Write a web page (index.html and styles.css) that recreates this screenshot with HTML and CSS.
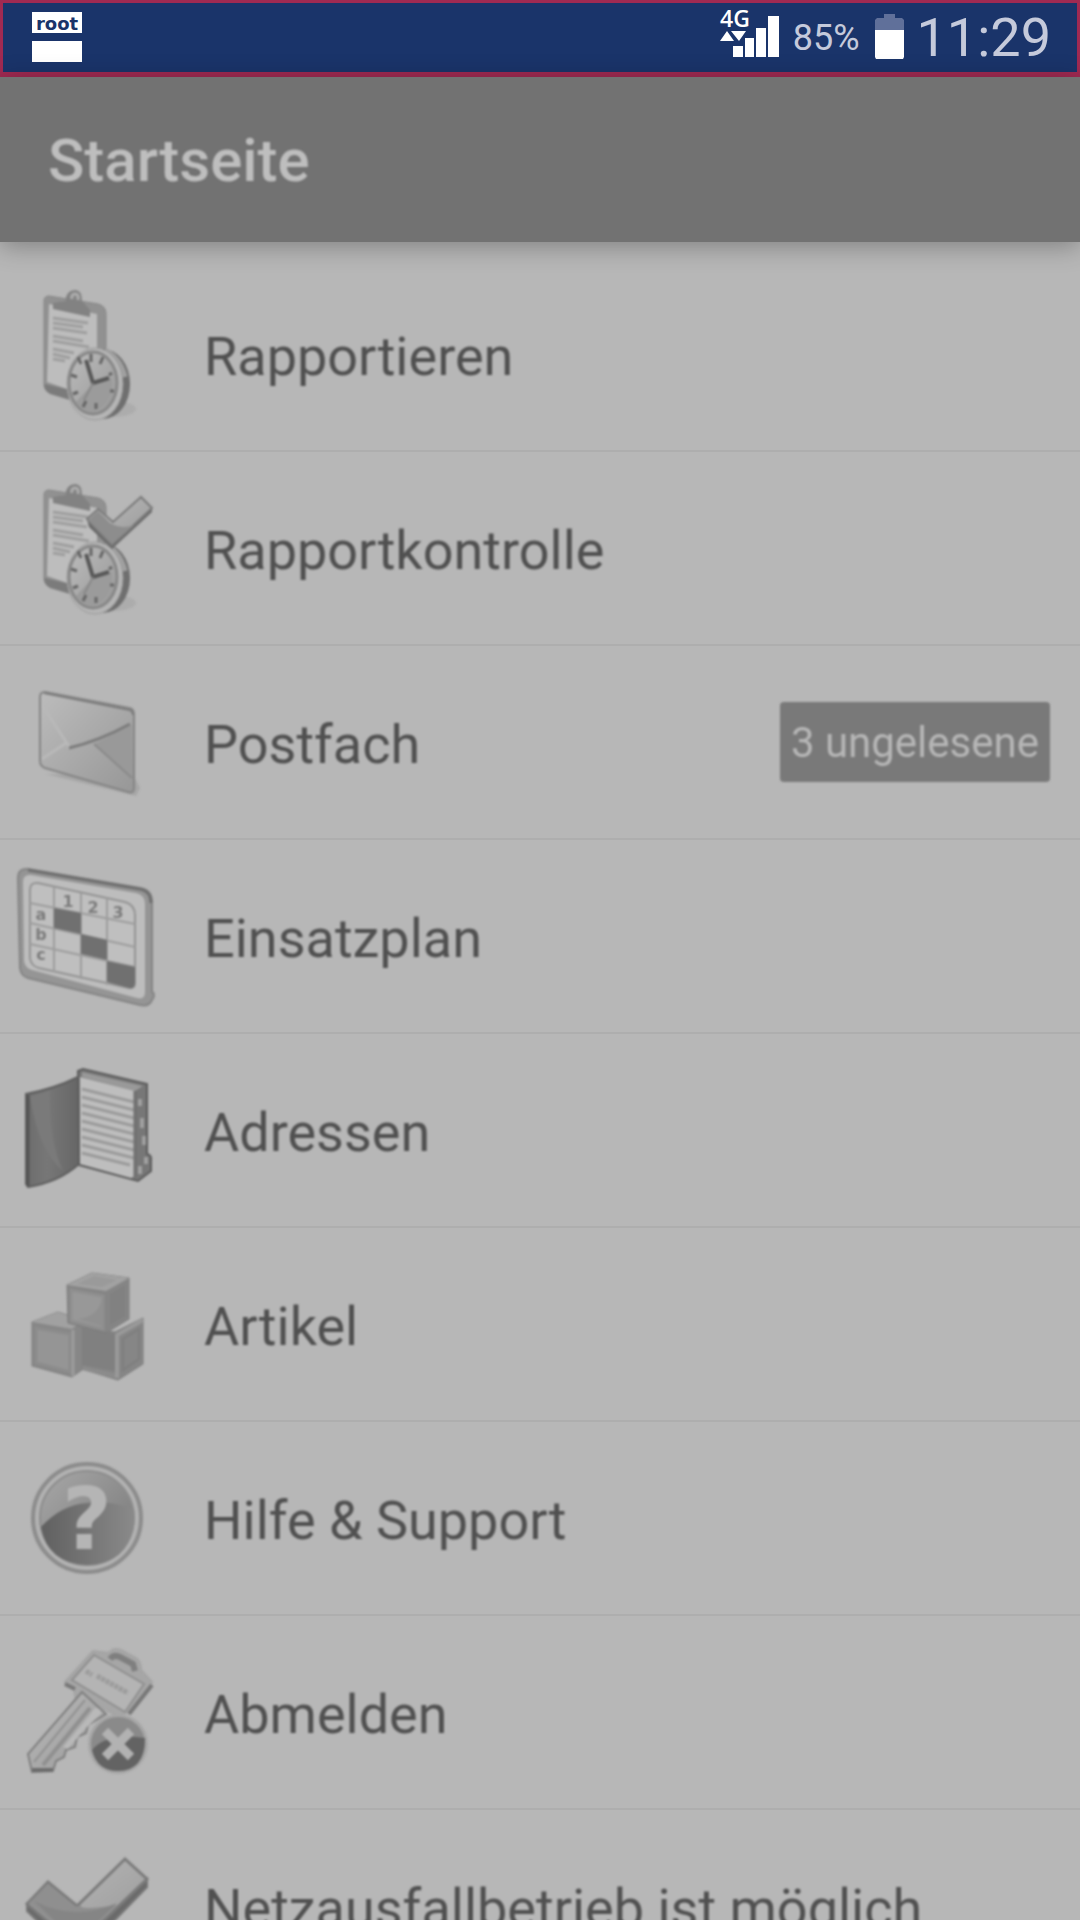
FILE: index.html
```html
<!DOCTYPE html>
<html lang="de">
<head>
    <meta charset="UTF-8">
    <meta name="viewport" content="width=device-width, initial-scale=1.0">
    <title>Startseite</title>
    <link rel="stylesheet" href="styles.css">
</head>
<body>
    <div class="statusbar">
        <div class="root-icon">
            <span>root</span>
            <span></span>
        </div>
        <div class="status-right">
            <svg class="signal" viewBox="0 0 60 50">
                <text x="0" y="18">4G</text>
                <path d="M0 32 7 22l7 10zM11 22h15l-7 10z"/>
                <path d="M13 37h10v11H13zM25 29h9v19h-9zM36 19h10v29H36zM48 7h11v41H48z"/>
            </svg>
            <span class="percent">85%</span>
            <svg class="battery" viewBox="0 0 30 46">
                <path class="battery-empty" d="M9 0h11v4h7l2 2v11H0V6l2-2h7z"/>
                <path d="M0 16h29v27l-1 2H1l-1-2z"/>
            </svg>
            <span class="clock">11:29</span>
        </div>
    </div>

    <header class="header">
        <h1>Startseite</h1>
    </header>

    <!-- shared gradients and shapes for the menu icons -->
    <svg class="defs" width="0" height="0" aria-hidden="true">
        <defs>
            <linearGradient id="light" x1="0" y1="0" x2="1" y2="1">
                <stop offset="0" stop-color="#bcbcbc"/>
                <stop offset="1" stop-color="#979797"/>
            </linearGradient>
            <linearGradient id="metal" x1="0" y1="0" x2="1" y2="1">
                <stop offset="0" stop-color="#a8a8a8"/>
                <stop offset="1" stop-color="#757575"/>
            </linearGradient>
            <linearGradient id="dark" x1="0" y1="0" x2="1" y2="0">
                <stop offset="0" stop-color="#6d6d6d"/>
                <stop offset=".4" stop-color="#777777"/>
                <stop offset="1" stop-color="#666666"/>
            </linearGradient>
            <linearGradient id="gloss" x1="0" y1="0" x2="1" y2="0">
                <stop offset="0" stop-color="#606060"/>
                <stop offset="1" stop-color="#8a8a8a"/>
            </linearGradient>
            <g id="report">
                <ellipse cx="112" cy="151" rx="24" ry="8" fill="#acacac"/>
                <path d="M44 43q0-5 5-5l49 8q8 2 8 10v82l-36 2-19-5q-7-2-7-9z" fill="#919191" stroke="#858585"/>
                <path d="M44 126l26 6v10l-20-6q-6-3-6-10z" fill="#7b7b7b"/>
                <path d="M49 46l48 10v78l-27-2-23-8z" fill="#bdbdbd"/>
                <path d="M53 45l13-2q-1-10 9-11 7 0 7 11l8 9v7l-37-8z" fill="#828282"/>
                <path d="M72 41q-1-5 3-5t3 6" fill="none" stroke="#adadad" stroke-width="3"/>
                <path d="M53 60l35 5M53 65l30 4M53 70l34 5M53 78l30 5M53 83l36 6M53 91l21 4M53 96l17 4M53 101l12 2" stroke="#9f9f9f" stroke-width="3"/>
                <ellipse cx="103" cy="126" rx="27" ry="35" fill="#6f6f6f"/>
                <path d="M105 92q16 9 20 27" fill="none" stroke="#a0a0a0" stroke-width="5"/>
                <ellipse cx="95" cy="126" rx="28" ry="36" fill="#b5b5b5" stroke="#9b9b9b"/>
                <ellipse cx="93" cy="125" rx="24" ry="31" fill="url(#light)" stroke="#888888" stroke-width="3"/>
                <path d="M93 126l19-6q2 25-19 34-12-1-17-10z" fill="#9b9b9b"/>
                <path d="M91 96v8M78 99l3 7M103 99l-3 7M71 117l6 2M73 136l5-2M83 149l3-6M110 133h4M112 115l-3 2M96 145v6" stroke="#666666" stroke-width="3"/>
                <path d="M86 102l7 23 16-5" fill="none" stroke="#585858" stroke-width="4"/>
                <path d="M93 125l-9 17" stroke="#888888" stroke-width="2"/>
            </g>
        </defs>
    </svg>

    <nav class="menu">
        <a class="menu-item" href="#rapportieren">
            <svg class="icon" viewBox="0 0 168 192"><use href="#report"/></svg>
            <span class="label">Rapportieren</span>
        </a>
        <a class="menu-item" href="#rapportkontrolle">
            <svg class="icon" viewBox="0 0 168 192">
                <use href="#report"/>
                <path d="M87 67l2 8 23 22 40-37v-4l-40 37z" fill="#6a6a6a"/>
                <path d="M87 67l11-10 15 13 28-25 11 11-40 37z" fill="url(#light)" stroke="#7b7b7b" stroke-width="2"/>
                <path d="M88 68l10-9 12 12q12 7 24 2l-22 19z" fill="#8d8d8d"/>
            </svg>
            <span class="label">Rapportkontrolle</span>
        </a>
        <a class="menu-item" href="#postfach">
            <svg class="icon" viewBox="0 0 168 192">
                <path d="M46 128l90 22 4-8-6-12z" fill="#a6a6a6"/>
                <path d="M40 51q0-5 5-5l84 16q5 1 5 6v74q0 6-6 4l-83-24q-5-2-5-7z" fill="url(#light)" stroke="#858585" stroke-width="2"/>
                <path d="M94 98l38-19v53z" fill="#999999"/>
                <path d="M42 113l24-16M42 59l28 43" stroke="#b9b9b9" stroke-width="3"/>
                <path d="M94 98l38 34" stroke="#8a8a8a" stroke-width="2"/>
                <path d="M69 102q30-7 61-24" fill="none" stroke="#7c7c7c" stroke-width="3"/>
                <path d="M44 47l86 17q3 1 3 5" fill="none" stroke="#7c7c7c" stroke-width="2"/>
            </svg>
            <span class="label">Postfach</span>
            <span class="badge">3 ungelesene</span>
        </a>
        <a class="menu-item" href="#einsatzplan">
            <svg class="icon" viewBox="0 0 168 192">
                <path d="M18 38q0-10 10-9l112 19q12 2 12 14v90q4 2 0 8-3 7-12 5L28 138q-7-2-8-10z" fill="#959595" stroke="#858585" stroke-width="2"/>
                <path d="M28 30l112 19q11 2 11 14" fill="none" stroke="#6f6f6f" stroke-width="3"/>
                <path d="M23 42q0-8 8-7l105 18q9 2 9 11v88q0 8-8 6L32 130q-7-2-8-9z" fill="#bdbdbd"/>
                <path d="M30 50q0-8 8-7l87 19q10 3 10 13v68q0 6-6 5L39 128q-8-2-9-10z" fill="#bfbfbf" stroke="#949494" stroke-width="2"/>
                <path d="M54 47v85M81 53v86M107 58v87M30 63l105 21M30 83l105 24M30 104l105 23" stroke="#9d9d9d" stroke-width="2"/>
                <path d="M54 68l27 5v21l-27-6zM81 94l26 6v20l-26-6zM107 121l28 6v16q0 6-6 5l-22-6z" fill="#707070"/>
                <g class="grid-text">
                    <text x="68" y="67">1</text>
                    <text x="93" y="73">2</text>
                    <text x="118" y="78">3</text>
                    <text x="41" y="80">a</text>
                    <text x="41" y="100">b</text>
                    <text x="41" y="120">c</text>
                </g>
            </svg>
            <span class="label">Einsatzplan</span>
        </a>
        <a class="menu-item" href="#adressen">
            <svg class="icon" viewBox="0 0 168 192">
                <path d="M78 37l5-2 64 15v70q5 1 4 7v10l-13 10-59-16z" fill="#777777" stroke="#5c5c5c" stroke-width="2"/>
                <path d="M82 38l61 14-8 5-53-14z" fill="#999999"/>
                <path d="M80 43l55 14v85l-4 2-51-14z" fill="#bebebe"/>
                <path d="M82 55l52 13M82 63l52 13M82 71l52 13M82 79l52 13M82 87l52 13M82 95l52 13M82 103l52 13M82 111l52 13M82 119l48 12" stroke="#9b9b9b" stroke-width="3"/>
                <path d="M135 57v86" stroke="#707070" stroke-width="3"/>
                <path d="M140 65v7M142 84v10M144 102v9M146 123v7M140 132v8" stroke="#a0a0a0" stroke-width="4"/>
                <path d="M26 60q28-5 52-17l1 87q-20 18-51 23l-2-3z" fill="url(#dark)" stroke="#5e5e5e" stroke-width="2"/>
                <path d="M30 62l20-5q-1 50 13 80-25-20-33-75z" fill="#7a7a7a"/>
                <path d="M28 61v91" stroke="#545454" stroke-width="3"/>
            </svg>
            <span class="label">Adressen</span>
        </a>
        <a class="menu-item" href="#artikel">
            <svg class="icon" viewBox="0 0 168 192">
                <path d="M75 100l40 4 28-14v46l-25 16-36-11-7-4z" fill="#868686" stroke="#7c7c7c"/>
                <path d="M82 99l33 7v37l-33-6z" fill="#808080"/>
                <path d="M78 139l38 9" stroke="#8c8c8c" stroke-width="4"/>
                <path d="M117 106v44M117 107l26-15" stroke="#999999" stroke-width="4"/>
                <path d="M123 111l16-10v30l-16 11z" fill="#868686" stroke="#7e7e7e" stroke-width="2"/>
                <path d="M32 94l26-10 24 8v50l-10 7-40-11z" fill="#878787" stroke="#808080"/>
                <path d="M32 94l26-10 24 9-10 8z" fill="#a1a1a1"/>
                <path d="M36 100l34 6v38l-34-9z" fill="#959595" stroke="#8c8c8c" stroke-width="3"/>
                <path d="M73 102v46" stroke="#9c9c9c" stroke-width="3"/>
                <path d="M67 57l25-12 37 5v41l-23 14-38-10z" fill="#858585" stroke="#7c7c7c"/>
                <path d="M67 57l25-12 37 5-23 13z" fill="#a2a2a2"/>
                <path d="M77 56l17-8 23 4-15 7z" fill="#9a9a9a"/>
                <path d="M71 62l32 6v33l-32-8z" fill="#989898" stroke="#8f8f8f" stroke-width="3"/>
                <path d="M110 66l15-9v31l-15 9z" fill="#818181"/>
                <path d="M78 91q20-2 24-20v27z" fill="#909090"/>
            </svg>
            <span class="label">Artikel</span>
        </a>
        <a class="menu-item" href="#hilfe">
            <svg class="icon" viewBox="0 0 168 192">
                <circle cx="87" cy="96" r="54" fill="#b2b2b2" stroke="#8c8c8c" stroke-width="4"/>
                <circle cx="87" cy="96" r="47" fill="url(#metal)" stroke="#8d8d8d" stroke-width="2"/>
                <path d="M41 105q20-22 46-24 22-3 47 6 1 8 0 17-7 38-47 39-40-2-46-38z" fill="url(#gloss)"/>
                <text class="help-mark" x="87" y="127">?</text>
            </svg>
            <span class="label">Hilfe &amp; Support</span>
        </a>
        <a class="menu-item" href="#abmelden">
            <svg class="icon" viewBox="0 0 168 192">
                <path d="M65 66l28-31 16 2q4-6 12-3l15 8q5 3 5 12l11 12-23 30-11 4-35-17-7 3-2-13-8-3z" fill="#a6a6a6" stroke="#a4a4a4" stroke-width="2"/>
                <path d="M110 43q4-5 10-2l13 7 2 7" fill="none" stroke="#7f7f7f" stroke-width="6"/>
                <path d="M65 68l10 5M152 69l-23 29" stroke="#787878" stroke-width="4"/>
                <path d="M82 76L28 138l4 18 21-1 3-10 8-4 2-7 9-3 2-10 9-4 2-8 18-11z" fill="url(#light)" stroke="#808080" stroke-width="2"/>
                <path d="M89 100l5-7q4-3 8 4l-17 16-17 20-5-2z" fill="#b9b9b9"/>
                <path d="M85 84l-51 62" stroke="#929292" stroke-width="2"/>
                <path d="M90 92l-47 57" stroke="#909090" stroke-width="4"/>
                <path d="M32 154h21" stroke="#6c6c6c" stroke-width="4"/>
                <path d="M72 64l22-25 50 29-19 28z" fill="#b4b4b4" stroke="#8f8f8f" stroke-width="2"/>
                <path d="M86 55l6 4M97 60l31 17" stroke="#9c9c9c" stroke-width="5" stroke-dasharray="4 1"/>
                <circle cx="118" cy="128" r="30" fill="#a6a6a6"/>
                <circle cx="118" cy="128" r="27" fill="#8a8a8a"/>
                <path d="M92 134q15-18 53-12 0 33-27 33-21 0-26-21z" fill="#636363"/>
                <path d="M105 115l26 26M131 115l-26 26" stroke="#b2b2b2" stroke-width="9"/>
            </svg>
            <span class="label">Abmelden</span>
        </a>
        <a class="menu-item" href="#netzausfall">
            <svg class="icon" viewBox="0 0 168 192">
                <path d="M27 94v7l50 48 70-72v-8l-70 67z" fill="#6a6a6a" stroke="#777777" stroke-width="2"/>
                <path d="M27 94l21-22 29 24 48-47 22 20-70 67z" fill="url(#light)" stroke="#7b7b7b" stroke-width="3"/>
                <path d="M29 93l19-19 24 20q3 4 9 1-3 6 36 0l-40 39z" fill="#8f8f8f"/>
                <path d="M34 91q40 21 83 2l-40 39z" fill="#858585"/>
            </svg>
            <span class="label">Netzausfallbetrieb ist möglich</span>
        </a>
    </nav>
</body>
</html>
```
FILE: styles.css
```css
* {
    box-sizing: border-box;
}

body {
    margin: 0;
    height: 100vh;
    display: flex;
    flex-direction: column;
    overflow: hidden;
    background-color: #b7b7b7;
    font-family: Roboto, sans-serif;
}

.statusbar {
    flex: none;
    height: 77px;
    display: flex;
    justify-content: space-between;
    align-items: flex-start;
    padding: 0 26px 0 29px;
    border: 3px solid #a02a52;
    border-bottom-width: 5px;
    background-color: #1a346a;
    color: #c5cadb;
}

.root-icon {
    width: 50px;
    padding-top: 9px;
    display: flex;
    flex-direction: column;
    gap: 8px;
}

.root-icon span {
    height: 21px;
    background-color: #fff;
    color: #1a346a;
    font: bold 18px/24px "DejaVu Sans", sans-serif;
    text-align: center;
}

.status-right {
    height: 70px;
    display: flex;
    align-items: center;
}

.signal {
    width: 60px;
    height: 50px;
    margin-right: 13px;
    margin-bottom: 8px;
    overflow: visible;
    fill: #fff;
}

.signal text {
    font: 600 23px/24px "Open Sans", sans-serif;
}

.percent {
    font-size: 36px;
    line-height: 70px;
    margin-right: 15px;
}

.battery {
    width: 30px;
    height: 46px;
    margin-right: 12px;
    margin-bottom: 2px;
    fill: #fff;
}

.battery-empty {
    fill: #60709a;
}

.clock {
    font-size: 54px;
    line-height: 70px;
}

.header {
    flex: none;
    height: 165px;
    display: flex;
    align-items: center;
    padding: 2px 48px 0;
    background-color: #727272;
    box-shadow: 0 4px 24px rgba(0, 0, 0, 0.3);
}

.header h1 {
    margin: 0;
    color: #bebebe;
    font-size: 60px;
    font-weight: 500;
    filter: blur(1px);
}

.defs {
    position: absolute;
}

.menu {
    padding-top: 16px;
}

.menu-item {
    height: 194px;
    display: flex;
    align-items: center;
    padding-right: 30px;
    border-bottom: 2px solid #aeaeae;
    color: #505050;
    text-decoration: none;
}

.icon {
    flex: none;
    width: 168px;
    height: 192px;
    margin-right: 36px;
    filter: blur(1px);
}

.grid-text {
    font: bold 16px "DejaVu Sans", sans-serif;
    text-anchor: middle;
    fill: #7c7c7c;
}

.help-mark {
    font: bold 86px "DejaVu Sans", sans-serif;
    text-anchor: middle;
    fill: #b5b5b5;
}

.label {
    flex: 1;
    padding-top: 4px;
    font-size: 54px;
    filter: blur(1px);
    white-space: nowrap;
}

.badge {
    padding: 2px 11px 0;
    border-radius: 4px;
    background-color: #797979;
    color: #b6b6b6;
    font-size: 42px;
    line-height: 78px;
    filter: blur(1px);
}
```
